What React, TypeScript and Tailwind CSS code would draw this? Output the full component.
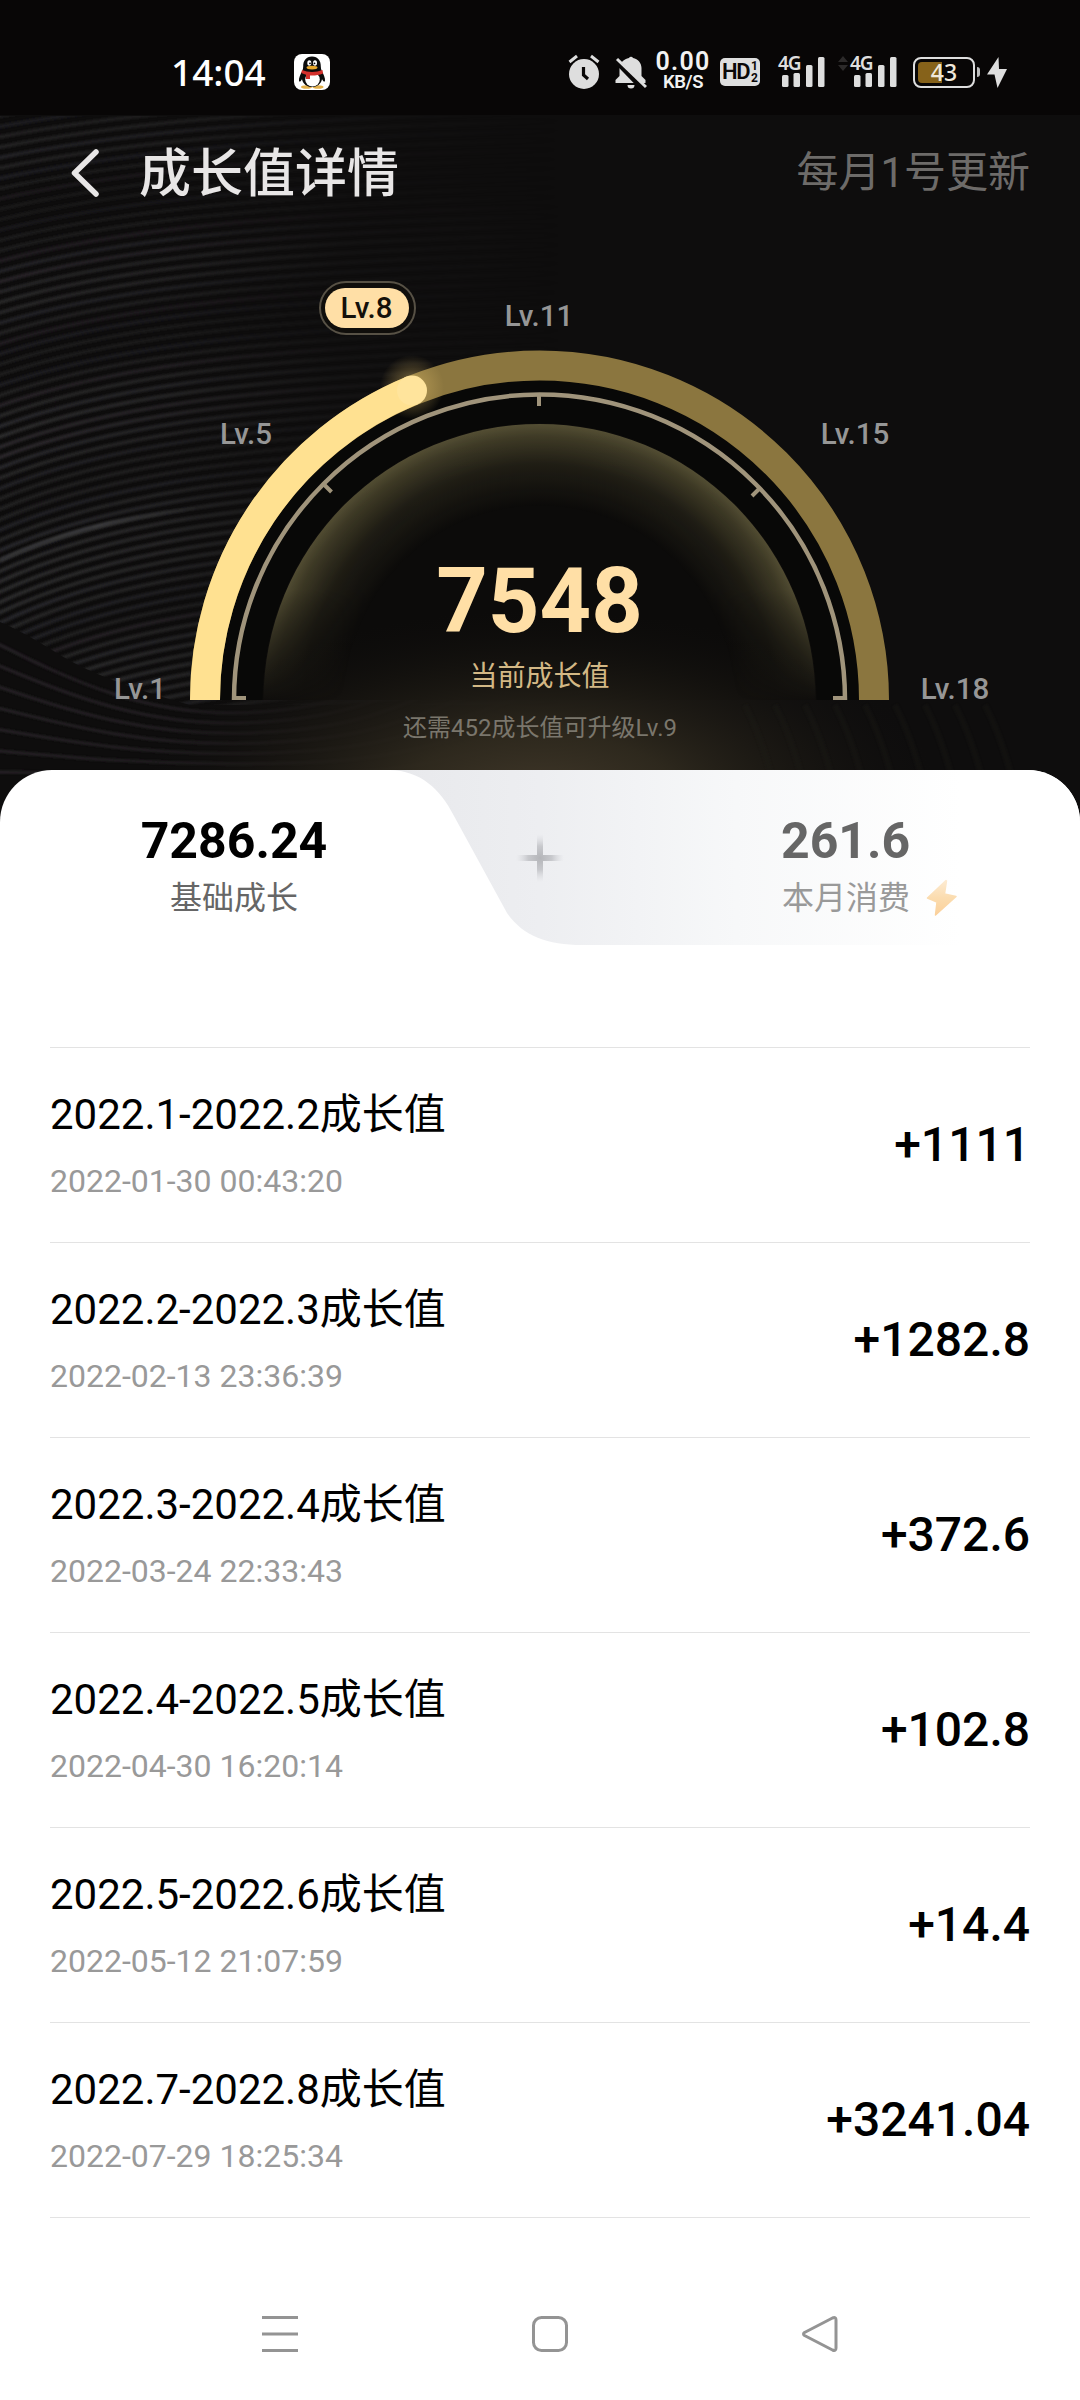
import type { ReactNode } from "react";

type Entry = { title: string; time: string; amount: string };

const ENTRIES: Entry[] = [
  { title: "2022.1-2022.2成长值", time: "2022-01-30 00:43:20", amount: "+1111" },
  { title: "2022.2-2022.3成长值", time: "2022-02-13 23:36:39", amount: "+1282.8" },
  { title: "2022.3-2022.4成长值", time: "2022-03-24 22:33:43", amount: "+372.6" },
  { title: "2022.4-2022.5成长值", time: "2022-04-30 16:20:14", amount: "+102.8" },
  { title: "2022.5-2022.6成长值", time: "2022-05-12 21:07:59", amount: "+14.4" },
  { title: "2022.7-2022.8成长值", time: "2022-07-29 18:25:34", amount: "+3241.04" },
];

const LEVELS = [
  { label: "Lv.1", x: 140, y: 699 },
  { label: "Lv.5", x: 246, y: 444 },
  { label: "Lv.11", x: 539, y: 326 },
  { label: "Lv.15", x: 855, y: 444 },
  { label: "Lv.18", x: 955, y: 699 },
];

// fine strands sweeping up to the right
const STRANDS = Array.from({ length: 70 }, (_, i) => {
  const y = 118 + i * 10.4;
  const k = (y - 110) / 450;
  return {
    d: `M-10 ${y} C90 ${y - 18 - 28 * k} 230 ${y - 36 - 40 * k} 560 ${y - 44 - 38 * k}`,
    o: 0.45 + 0.45 * Math.min(1, k) + 0.2 * Math.sin(i * 0.45),
  };
});

// wider waves along the bottom left corner
const WAVES = Array.from({ length: 7 }, (_, i) => {
  const y = 640 + i * 22;
  const drop = 80 - i * 13;
  return `M-10 ${y} C70 ${y + drop * 0.5} 150 ${y + drop} 260 ${y + drop * 0.9} S 400 ${y + drop * 0.4} 520 ${y - 30}`;
});

function Backdrop() {
  return (
    <svg className="absolute inset-0" width="1080" height="830" viewBox="0 0 1080 830" fill="none">
      <defs>
        <linearGradient id="fadeX" x1="0" y1="0" x2="560" y2="0" gradientUnits="userSpaceOnUse">
          <stop offset="0" stopColor="#fff" />
          <stop offset=".3" stopColor="#fff" stopOpacity=".8" />
          <stop offset=".6" stopColor="#fff" stopOpacity=".25" />
          <stop offset="1" stopColor="#fff" stopOpacity="0" />
        </linearGradient>
        <mask id="fadeMask" maskUnits="userSpaceOnUse" x="0" y="0" width="1080" height="830">
          <rect width="560" height="830" fill="url(#fadeX)" />
        </mask>
        <clipPath id="upper">
          <path d="M0 116H560V705H190Q100 680 60 655T0 622Z" />
        </clipPath>
        <filter id="soft" x="0" y="0" width="1080" height="830" filterUnits="userSpaceOnUse">
          <feGaussianBlur stdDeviation=".9" />
        </filter>
        <linearGradient id="streak" x1="0" y1="0" x2="200" y2="0" gradientUnits="userSpaceOnUse">
          <stop offset="0" stopColor="#333335" />
          <stop offset=".5" stopColor="#3a3a3c" />
          <stop offset="1" stopColor="#38383a" stopOpacity="0" />
        </linearGradient>
        <radialGradient id="floor" gradientUnits="userSpaceOnUse" cx="0" cy="0" r="1" gradientTransform="translate(540 800) scale(400 190)">
          <stop offset="0" stopColor="#41382a" />
          <stop offset=".35" stopColor="#332d20" stopOpacity=".85" />
          <stop offset=".7" stopColor="#231f17" stopOpacity=".4" />
          <stop offset="1" stopColor="#131110" stopOpacity="0" />
        </radialGradient>
      </defs>
      <rect width="1080" height="830" fill="#0e0d0d" />
      <rect width="1080" height="115" fill="#080606" />
      <g mask="url(#fadeMask)">
        <g clipPath="url(#upper)" filter="url(#soft)" stroke="#2a292c" strokeWidth="4">
          {STRANDS.map((s) => (
            <path key={s.d} d={s.d} opacity={s.o} />
          ))}
        </g>
        <g filter="url(#soft)" stroke="#262426" strokeWidth="3">
          {WAVES.map((d) => (
            <path key={d} d={d} />
          ))}
        </g>
      </g>
      <path d="M0 560C50 537 110 518 200 508" stroke="url(#streak)" strokeWidth="4" filter="url(#soft)" />
      {/* plain dial face */}
      <path d="M205 700a334.500 334.500 0 0 1 669 0Z" fill="#0c0b0a" />
      <rect x="140" y="600" width="800" height="230" fill="url(#floor)" />
      <g stroke="#1d1b18" strokeWidth="6" opacity=".3" filter="url(#soft)">
        {[745, 775, 805, 835, 865, 895, 925, 955, 985].map((x) => (
          <path key={x} d={`M${x} 705Q${x + 18} 740 ${x + 30} 790`} />
        ))}
      </g>
    </svg>
  );
}

function SignalBars() {
  return (
    <div className="relative h-[32px] w-[47px]">
      <span className="absolute left-0 top-[-5px] font-['Noto_Sans'] text-[19px] font-semibold leading-[24px] tracking-[-1px] text-[#dedede]">
        4G
      </span>
      <svg className="absolute left-0 top-0" width="47" height="32" viewBox="0 0 47 32" fill="#dedede">
        <rect x="4" y="19" width="6.5" height="12" rx="1.5" />
        <rect x="15.5" y="17" width="6.5" height="14" rx="1.5" />
        <rect x="28" y="9" width="6.5" height="22" rx="1.5" />
        <rect x="40" y="1" width="6.5" height="30" rx="1.5" />
      </svg>
    </div>
  );
}

function StatusBar() {
  return (
    <div className="flex h-[115px] items-center pl-[171px] pr-[73px] pt-[29px]">
      <span className="mb-[2px] font-['Noto_Sans'] text-[37px] font-medium leading-none text-white">14:04</span>
      <svg className="ml-[28px]" width="36" height="36" viewBox="0 0 36 36">
        <rect width="36" height="36" rx="8" fill="#fff" />
        <ellipse cx="12.5" cy="33" rx="5.5" ry="1.8" fill="#e3b04b" />
        <ellipse cx="24" cy="33" rx="5.5" ry="1.8" fill="#e3b04b" />
        <path d="M18 2.500c-6 0-9 4.500-8.800 10 0 1.500-.3 3-1 4.500-1.700 3.500-3.700 7-3.200 10 .6 1.500 2-.2 3-1.800C9 30 13 33 18 33s9-3 10-7.800c1 1.600 2.400 3.300 3 1.800.5-3-1.500-6.500-3.200-10-.7-1.500-1-3-1-4.500C27 7 24 2.500 18 2.500Z" fill="#0b0b0b" />
        <ellipse cx="18.5" cy="25.5" rx="7.3" ry="7" fill="#fff" />
        <ellipse cx="15.3" cy="9" rx="2" ry="2.8" fill="#fff" />
        <ellipse cx="21" cy="9" rx="2" ry="2.8" fill="#fff" />
        <circle cx="16" cy="9.3" r=".9" />
        <circle cx="20.5" cy="9.3" r=".9" />
        <ellipse cx="18" cy="13.6" rx="5.5" ry="1.9" fill="#e9a92c" />
        <path d="M8 16c6 2.600 14 2.600 20.500 0l.5 3.500c-4 1.800-9 2.300-13 2V25h-4v-4.200L7.300 19Z" fill="#d3302c" />
      </svg>

      <div className="ml-auto flex items-center">
        <svg width="32" height="36" viewBox="0 0 32 36" fill="none">
          <circle cx="16" cy="20" r="15" fill="#dedede" />
          <path d="M1.500 8 9 2M30.500 8 23 2" stroke="#dedede" strokeWidth="3" />
          <path d="M15.500 13v8l4.500 4" stroke="#0a0808" strokeWidth="3.2" />
        </svg>
        <svg className="ml-[15px]" width="32" height="36" viewBox="0 0 32 36">
          <path d="M14 4a2.200 2.200 0 0 1 4 0c5 1 8.500 5 8.500 10v8l4 4v3h-30v-3l4-4v-8C4.500 9 9 5 14 4Z" fill="#dedede" />
          <path d="M12.500 31h7a3.500 3.500 0 0 1-7 0Z" fill="#dedede" />
          <path d="M-1 5 28 35" stroke="#0a0808" strokeWidth="5" />
          <path d="M2 5 31 33" stroke="#dedede" strokeWidth="3" />
        </svg>
        <div className="ml-[8px] flex w-[56px] flex-col items-center font-['Roboto'] font-semibold text-[#f2f2f2]">
          <span className="text-[25px] leading-[21px] tracking-[1.2px]">0.00</span>
          <span className="text-[18.5px] leading-[21px] tracking-[-0.4px]">KB/S</span>
        </div>
        <div className="ml-[9px] flex h-[28px] w-[40px] items-center justify-center rounded-[5px] bg-[#dedede] font-['Roboto'] text-[#0a0808]">
          <span className="text-[22px] font-semibold leading-none tracking-[-1.5px]">HD</span>
          <span className="ml-[2px] flex flex-col text-[12px] font-bold leading-[12px]">
            <span>1</span>
            <span>2</span>
          </span>
        </div>
        <div className="ml-[18px]">
          <SignalBars />
        </div>
        <svg className="mb-[18px] ml-[13px]" width="10" height="15" viewBox="0 0 10 15" fill="#2c2a2a">
          <path d="M0 6 5 0l5 6ZM0 9h10l-5 6Z" />
        </svg>
        <div className="ml-[2px]">
          <SignalBars />
        </div>
        <div className="relative ml-[16px] flex h-[31px] w-[62px] items-center justify-center rounded-[8px] border-2 border-[#dedede]">
          <span className="absolute left-[3px] top-[3px] h-[21px] w-[24px] rounded-l-[4px] bg-[#86621a]" />
          <span className="relative font-['Noto_Sans'] text-[23px] font-medium leading-none text-[#f0e8da]">43</span>
        </div>
        <span className="ml-[2px] h-[10px] w-[3px] rounded-r bg-[#bdbdbd]" />
        <svg className="ml-[7px]" width="20" height="31" viewBox="0 0 20 31" fill="#dedede">
          <path d="M11.500 0 0 17.500h7.500L10.500 31 20 12h-8Z" />
        </svg>
      </div>
    </div>
  );
}

function TitleBar() {
  return (
    <div className="flex h-[115px] items-center pl-[68px] pr-[50px]">
      <svg width="34" height="50" viewBox="0 0 34 50" fill="none" stroke="#e8e6e6" strokeWidth="5.5" strokeLinecap="round" strokeLinejoin="round">
        <path d="M28 4 6.500 25 28 46" />
      </svg>
      <h1 className="ml-[37px] mt-[4px] text-[52px] font-medium leading-none text-[#e8e6e6]">成长值详情</h1>
      <span className="ml-auto text-[42px] leading-none text-[#6d6b69]">每月1号更新</span>
    </div>
  );
}

function Gauge() {
  return (
    <svg className="block" width="1080" height="540" viewBox="0 230 1080 540" fill="none">
      <defs>
        <radialGradient id="rim" gradientUnits="userSpaceOnUse" cx="539.5" cy="700" r="277">
          <stop offset=".7" stopColor="#5a5435" stopOpacity="0" />
          <stop offset=".85" stopColor="#5a5435" stopOpacity=".25" />
          <stop offset=".95" stopColor="#5a5435" stopOpacity=".65" />
          <stop offset="1" stopColor="#5e583a" stopOpacity=".9" />
        </radialGradient>
        <linearGradient id="rimFade" x1="0" y1="420" x2="0" y2="702" gradientUnits="userSpaceOnUse">
          <stop offset="0" stopColor="#fff" />
          <stop offset=".6" stopColor="#fff" stopOpacity=".95" />
          <stop offset="1" stopColor="#fff" stopOpacity="0" />
        </linearGradient>
        <mask id="rimMask" maskUnits="userSpaceOnUse" x="240" y="400" width="600" height="302">
          <rect x="240" y="400" width="600" height="302" fill="url(#rimFade)" />
        </mask>
        <radialGradient id="tip">
          <stop offset="0" stopColor="#ffe08d" stopOpacity=".6" />
          <stop offset=".45" stopColor="#d9b866" stopOpacity=".3" />
          <stop offset="1" stopColor="#d9b866" stopOpacity="0" />
        </radialGradient>
      </defs>

      {/* dark channel between the bar and the dial */}
      <path d="M241 700a298.500 298.500 0 0 1 597 0" stroke="#080807" strokeWidth="43" />
      <path d="M263.500 700a276 276 0 0 1 552 0Z" fill="url(#rim)" mask="url(#rimMask)" />
      <path d="M234 700a305.500 305.500 0 0 1 611 0" stroke="#a0947b" strokeWidth="4.5" />
      <path d="M232 698h14M847 698h-14M539 395v11M323.500 484l8 8M760 488l-8 8" stroke="#a0947b" strokeWidth="4" />

      <path d="M205 700a334.500 334.500 0 0 1 669 0" stroke="#8b763f" strokeWidth="30" />
      <circle cx="412" cy="387" r="32" fill="url(#tip)" />
      <path d="M205 700A334.500 334.500 0 0 1 412 390.500" stroke="#ffe191" strokeWidth="30" />
      <circle cx="412" cy="390.5" r="15" fill="#ffe49c" />

      <g className="font-['Roboto'] text-[29.5px] font-medium" fill="#969696" textAnchor="middle">
        {LEVELS.map((l) => (
          <text key={l.label} x={l.x} y={l.y}>
            {l.label}
          </text>
        ))}
      </g>

      <rect x="320" y="282" width="95" height="52" rx="26" fill="#100e0b" stroke="#575145" strokeWidth="2" />
      <rect x="325" y="288" width="84" height="40" rx="20" fill="#ffdfa6" />
      <text x="366.5" y="318" className="font-['Roboto'] text-[29.5px] font-medium" fill="#15110a" textAnchor="middle">
        Lv.8
      </text>

      <text x="539.5" y="632" className="text-[90px] font-bold" fill="#ffdfa6" textAnchor="middle">
        7548
      </text>
      <text x="539.5" y="686" className="text-[28px]" fill="#d3b885" textAnchor="middle">
        当前成长值
      </text>
      <text x="540" y="736" className="text-[24px]" fill="#7a766c" textAnchor="middle">
        还需452成长值可升级Lv.9
      </text>
    </svg>
  );
}

function Summary() {
  return (
    <div className="relative h-[277px]">
      <svg className="absolute left-0 top-0" width="1080" height="175" viewBox="0 0 1080 175" fill="none">
        <defs>
          <linearGradient id="tab" x1="400" y1="0" x2="960" y2="0" gradientUnits="userSpaceOnUse">
            <stop offset="0" stopColor="#e8e9ec" />
            <stop offset=".25" stopColor="#edeef1" />
            <stop offset=".6" stopColor="#f7f8f9" />
            <stop offset="1" stopColor="#fff" />
          </linearGradient>
          <radialGradient id="spark" gradientUnits="userSpaceOnUse" cx="540" cy="88" r="24">
            <stop offset="0" stopColor="#b4b5b9" />
            <stop offset=".5" stopColor="#c8c9cd" />
            <stop offset="1" stopColor="#dcdde1" stopOpacity="0" />
          </radialGradient>
        </defs>
        <path d="M390 0C420 1 440 18 454 46L507 143C522 165 547 175 582 175H1080V0Z" fill="url(#tab)" />
        <path d="M516 85h48v6h-48ZM537 64h6v48h-6Z" fill="url(#spark)" />
      </svg>
      <div className="relative flex pt-[46px]">
        <div className="flex w-[468px] flex-col items-center">
          <span className="text-[50px] font-bold leading-[51px] text-black">7286.24</span>
          <span className="mt-[14px] text-[32px] leading-[34px] text-[#666]">基础成长</span>
        </div>
        <div className="ml-[313px] flex flex-col items-start">
          <span className="text-[50px] font-bold leading-[51px] text-[#666]">261.6</span>
          <span className="ml-[1px] mt-[14px] flex h-[34px] items-center text-[32px] leading-[34px] text-[#999]">
            本月消费
            <svg className="ml-[16px]" width="32" height="38" viewBox="0 0 32 38">
              <defs>
                <linearGradient id="bolt" x1="0" y1="0" x2="0" y2="1">
                  <stop offset="0" stopColor="#fdebd2" />
                  <stop offset=".5" stopColor="#fbdcaf" />
                  <stop offset="1" stopColor="#fbd09a" />
                </linearGradient>
              </defs>
              <path d="M20 1.500 1.500 19 11 23 9.500 36 30 17.500 18.500 15 20.500 2Z" fill="url(#bolt)" stroke="url(#bolt)" strokeWidth="1.5" strokeLinejoin="round" />
            </svg>
          </span>
        </div>
      </div>
    </div>
  );
}

function EntryRow({ title, time, amount }: Entry) {
  return (
    <li className="flex h-[195px] items-center justify-between border-b-[1px] border-[#e3e3e3]">
      <div className="mb-[2px]">
        <div className="text-[42px] leading-[50px] text-black">{title}</div>
        <div className="mt-[23px] text-[32px] leading-[36px] text-[#999]">{time}</div>
      </div>
      <span className="text-[48px] font-medium leading-none text-black">{amount}</span>
    </li>
  );
}

function NavIcon({ children }: { children: ReactNode }) {
  return (
    <svg width="40" height="40" viewBox="0 0 40 40" fill="none" stroke="#949494" strokeWidth="3" strokeLinejoin="round">
      {children}
    </svg>
  );
}

export default function App() {
  return (
    <div className="relative h-[2400px] w-[1080px] overflow-hidden bg-white font-['Roboto','Noto_Sans_CJK_SC',sans-serif]">
      <Backdrop />
      <div className="relative">
        <StatusBar />
        <TitleBar />
        <Gauge />
      </div>

      <div className="relative h-[1630px] overflow-hidden rounded-t-[52px] bg-white">
        <Summary />
        <ul className="mx-[50px] border-t-[1px] border-[#e3e3e3]">
          {ENTRIES.map((e) => (
            <EntryRow key={e.title} {...e} />
          ))}
        </ul>
        <div className="mt-[96px] flex items-center gap-[230px] pl-[260px]">
          <NavIcon>
            <path d="M2 3.500h36M2 20h36M2 36.500h36" />
          </NavIcon>
          <NavIcon>
            <rect x="3.5" y="3.5" width="33" height="33" rx="8" />
          </NavIcon>
          <NavIcon>
            <path d="M32.500 4 4.500 18.500q-2 1.500 0 3L32.500 36q3.500 1.500 3.500-2V6q0-3.500-3.500-2Z" />
          </NavIcon>
        </div>
      </div>
    </div>
  );
}
